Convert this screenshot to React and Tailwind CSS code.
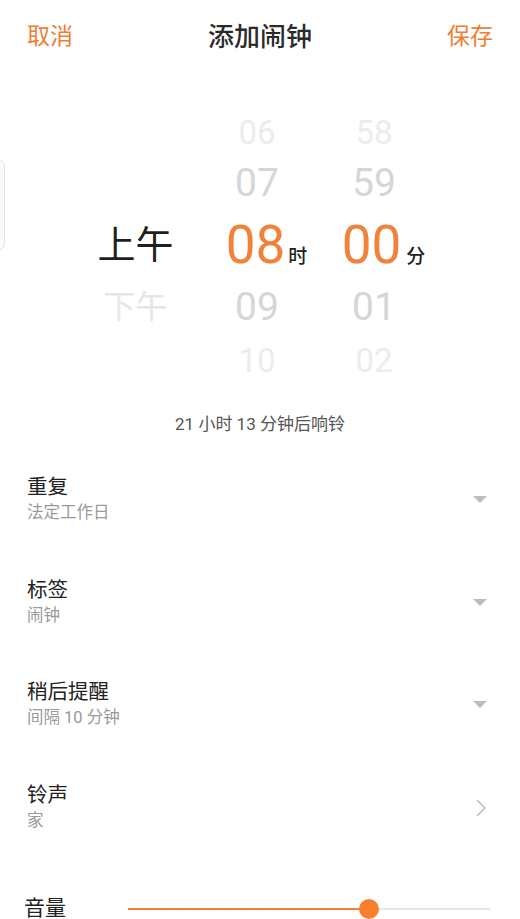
import React from "react";

const FONT = { fontFamily: "Roboto, 'Noto Sans CJK SC', sans-serif" };

function PickerRow({ h, ampm, hour, minute, ampmClass = "", numClass = "", selected }) {
  return (
    <div className={"grid grid-cols-[195px_124px_106px] items-center " + h}>
      <div className={"pl-[76px] text-center leading-none " + ampmClass}>{ampm}</div>
      <div className={"text-center leading-none " + numClass}>
        {hour}
        {selected && (
          <span className="inline-block w-0 whitespace-nowrap pl-[3px] text-[19px] font-medium text-[#222]">时</span>
        )}
      </div>
      <div className={"pl-[4px] text-center leading-none " + numClass}>
        {minute}
        {selected && (
          <span className="inline-block w-0 whitespace-nowrap pl-[5px] text-[19px] font-medium text-[#222]">分</span>
        )}
      </div>
    </div>
  );
}

function Caret() {
  return (
    <svg width="14" height="8" viewBox="0 0 14 8">
      <path d="M0 0 L14 0 L7 7 Z" fill="#bdbdbd" />
    </svg>
  );
}

function Chevron() {
  return (
    <svg width="12" height="20" viewBox="0 0 12 20">
      <path d="M2 2 L10 10 L2 18" fill="none" stroke="#bdbdbd" strokeWidth="1.6" />
    </svg>
  );
}

function SettingRow({ title, sub, icon }) {
  return (
    <div className="flex h-[102.5px] items-center justify-between pl-[27px] pr-[33px]">
      <div className="flex flex-col">
        <div className="text-[20.5px] leading-[26px] text-[#222]">{title}</div>
        <div className="text-[16.5px] leading-[26px] text-[#9a9a9a]">{sub}</div>
      </div>
      {icon}
    </div>
  );
}

export default function App() {
  return (
    <div className="relative h-[919px] w-[520px] overflow-hidden bg-white" style={FONT}>
      {/* floating side handle */}
      <div className="absolute left-[-8px] top-[160px] h-[90px] w-[13px] rounded-md border border-[#e2e2e2] bg-[#fafafa]" />

      <header className="flex h-[74px] items-center justify-between px-[27px]">
        <button className="text-[23px] text-[#ef7d33]">取消</button>
        <h1 className="text-[26px] font-medium text-[#2b2b2b]">添加闹钟</h1>
        <button className="text-[23px] text-[#ef7d33]">保存</button>
      </header>

      <div className="pt-[33px] pb-[13px]">
        <PickerRow h="h-[50px]" ampm="" hour="06" minute="58" numClass="text-[33px] text-[#ececec]" />
        <PickerRow h="h-[52px]" ampm="" hour="07" minute="59" numClass="text-[39px] text-[#d6d6d6]" />
        <PickerRow
          h="h-[72px]"
          ampm="上午"
          hour="08"
          minute="00"
          ampmClass="text-[38px] text-[#1f1f1f]"
          numClass="text-[53px] text-[#f0823a]"
          selected
        />
        <PickerRow
          h="h-[52px]"
          ampm="下午"
          hour="09"
          minute="01"
          ampmClass="text-[32px] text-[#e6e6e6]"
          numClass="text-[39px] text-[#d6d6d6]"
        />
        <PickerRow h="h-[54px]" ampm="" hour="10" minute="02" numClass="text-[33px] text-[#ececec]" />
      </div>

      <div className="flex h-[49px] items-center justify-center text-[17px] text-[#555]">
        21 小时 13 分钟后响铃
      </div>

      <SettingRow title="重复" sub="法定工作日" icon={<Caret />} />
      <SettingRow title="标签" sub="闹钟" icon={<Caret />} />
      <SettingRow title="稍后提醒" sub="间隔 10 分钟" icon={<Caret />} />
      <SettingRow title="铃声" sub="家" icon={<Chevron />} />

      <div className="flex h-[100px] items-center pl-[24px] pr-[30px]">
        <div className="w-[104px] text-[21px] text-[#222]">音量</div>
        <div className="relative flex h-[20px] flex-1 items-center">
          <div className="h-[2px] w-[241px] bg-[#f0823a]" />
          <div className="h-[2px] flex-1 bg-[#e6e6e6]" />
          <div className="absolute left-[231px] top-0 h-[20px] w-[20px] rounded-full bg-[#f7802f]" />
        </div>
      </div>
    </div>
  );
}
